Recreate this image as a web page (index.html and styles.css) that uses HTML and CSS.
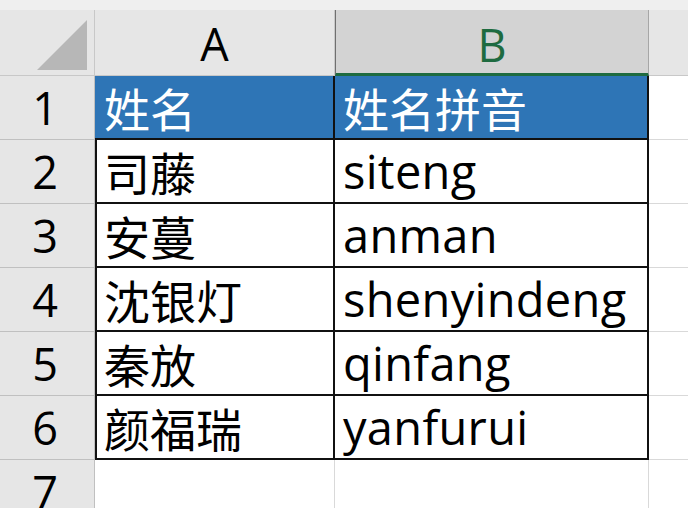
FILE: index.html
```html
<!DOCTYPE html>
<html>
<head>
<meta charset="utf-8">
<link rel="stylesheet" href="styles.css">
</head>
<body>
<div class="topstrip"></div>
<div class="sheet">
  <div class="corner"><div class="tri"></div></div>
  <div class="colhead">A</div>
  <div class="colhead sel">B</div>
  <div class="colhead rest"></div>

  <div class="rowhead">1</div>
  <div class="cell hdr a">姓名</div>
  <div class="cell hdr b">姓名拼音</div>
  <div class="cell blank"></div>

  <div class="rowhead">2</div>
  <div class="cell data a">司藤</div>
  <div class="cell data b">siteng</div>
  <div class="cell blank"></div>

  <div class="rowhead">3</div>
  <div class="cell data a">安蔓</div>
  <div class="cell data b">anman</div>
  <div class="cell blank"></div>

  <div class="rowhead">4</div>
  <div class="cell data a">沈银灯</div>
  <div class="cell data b">shenyindeng</div>
  <div class="cell blank"></div>

  <div class="rowhead">5</div>
  <div class="cell data a">秦放</div>
  <div class="cell data b">qinfang</div>
  <div class="cell blank"></div>

  <div class="rowhead">6</div>
  <div class="cell data a">颜福瑞</div>
  <div class="cell data b">yanfurui</div>
  <div class="cell blank"></div>

  <div class="rowhead">7</div>
  <div class="cell empty"></div>
  <div class="cell empty"></div>
  <div class="cell blank"></div>
</div>
</body>
</html>
```

FILE: styles.css
```css
* { box-sizing: border-box; }
html, body {
  margin: 0;
  padding: 0;
  width: 688px;
  height: 508px;
  overflow: hidden;
  background: #ffffff;
}
body {
  font-family: "Open Sans", "Noto Sans CJK SC", sans-serif;
}
.topstrip {
  height: 10px;
  background: #efefef;
}
.sheet {
  display: grid;
  grid-template-columns: 95px 240px 314px 39px;
  grid-template-rows: 66px repeat(7, 64px);
}
.corner {
  background: #e6e6e6;
  border-right: 1px solid #c8c8c8;
  border-bottom: 1px solid #c8c8c8;
  position: relative;
}
.tri {
  position: absolute;
  left: 37px;
  top: 10px;
  width: 50px;
  height: 50px;
  background: #b7b7b7;
  clip-path: polygon(100% 0, 100% 100%, 0 100%);
}
.colhead {
  background: #e6e6e6;
  border-right: 1px solid #c8c8c8;
  border-bottom: 1px solid #c8c8c8;
  display: flex;
  align-items: center;
  justify-content: center;
  font-family: "Open Sans", sans-serif;
  font-size: 45px;
  color: #000;
  padding-top: 2px;
}
.colhead.sel {
  background: #d3d3d3;
  color: #1e6b40;
  border-left: 1px solid #6f6f6f;
  border-right: 1px solid #a6a6a6;
  border-bottom: 3px solid #1e6b40;
  padding-top: 5px;
}
.colhead.rest {
  border-right: none;
}
.rowhead {
  background: #e6e6e6;
  border-right: 1px solid #c0c0c0;
  border-bottom: 1px solid #c0c0c0;
  display: flex;
  align-items: center;
  justify-content: center;
  font-family: "Open Sans", sans-serif;
  font-size: 45px;
  color: #000;
  padding-right: 4px;
}
.cell {
  display: flex;
  align-items: center;
  padding-left: 8px;
  font-size: 46px;
  color: #000;
  white-space: nowrap;
}
.cell.b {
  font-size: 47px;
  letter-spacing: 0.3px;
}
.cell.hdr.b {
  font-size: 46px;
  letter-spacing: 0;
}
.cell.hdr {
  background: #2e75b6;
  color: #fff;
  border-bottom: 2px solid #111;
  border-right: 2px solid #111;
}
.cell.data {
  background: #fff;
  border-bottom: 2px solid #111;
  border-right: 2px solid #111;
}
.cell.data.a {
  border-left: 2px solid #111;
  padding-left: 7px;
}
.cell.hdr.a {
  padding-left: 9px;
}
.cell.blank {
  border-bottom: 1px solid #d9d9d9;
}
.cell.empty {
  border-right: 1px solid #d9d9d9;
  border-bottom: 1px solid #d9d9d9;
}
```
